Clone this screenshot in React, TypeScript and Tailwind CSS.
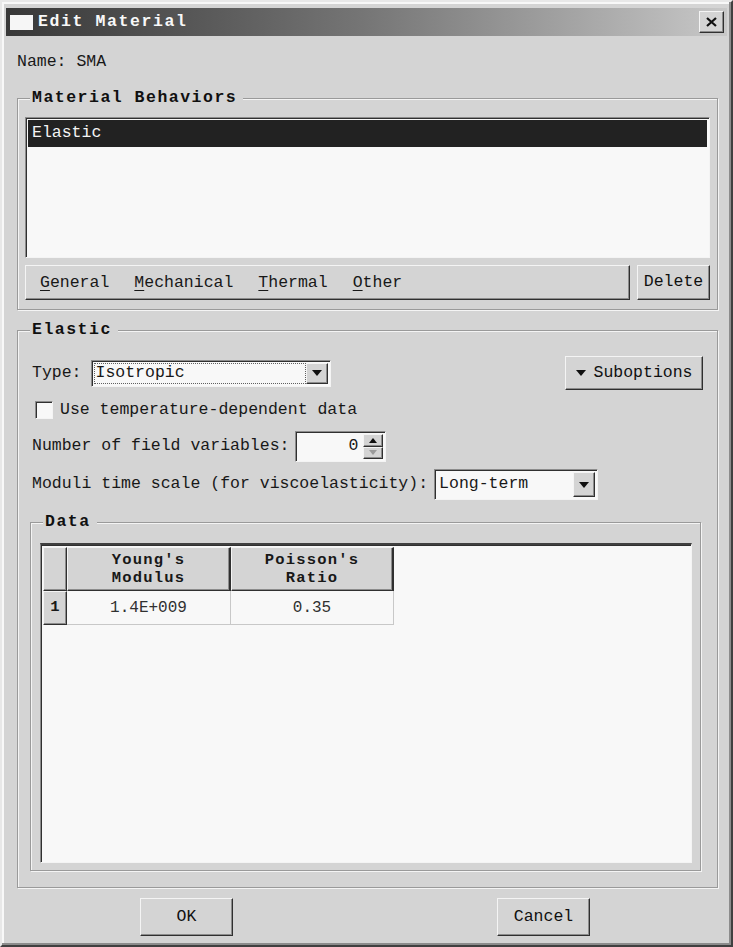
import React from 'react';

const mono = "font-['Liberation_Mono','DejaVu_Sans_Mono',monospace]";

const raised =
  'border border-t-[#f4f4f4] border-l-[#f4f4f4] border-b-[#303030] border-r-[#303030] shadow-[inset_-1px_-1px_0_#8c8c8c]';
const sunken =
  'border border-t-[#8c8c8c] border-l-[#8c8c8c] border-b-[#f4f4f4] border-r-[#f4f4f4] shadow-[inset_1px_1px_0_#303030]';

type GroupProps = {
  label: string;
  className?: string;
  children: React.ReactNode;
};

const Group = ({ label, className, children }: GroupProps) => {
  return (
    <div
      className={`relative border border-[#9a9a9a] shadow-[inset_1px_1px_0_#f4f4f4,1px_1px_0_#f4f4f4] ${className ?? ''}`}
    >
      <span className="absolute -top-[10px] left-[12px] bg-[#d4d4d4] pl-[2px] pr-[6px] text-[16.5px] leading-[18px] font-bold tracking-[1.5px] text-[#101010]">
        {label}
      </span>
      {children}
    </div>
  );
};

const Arrow = ({ className }: { className?: string }) => (
  <svg width="12" height="8" viewBox="0 0 12 8" className={className}>
    <path d="M1 1h10L6 7z" fill="currentColor" />
  </svg>
);

const Combo = ({ value, width, focus }: { value: string; width: string; focus?: boolean }) => {
  return (
    <div className={`flex items-stretch bg-[#f8f8f8] p-[2px] ${sunken} ${width}`}>
      <div
        className={`flex flex-1 items-center pl-[2px] text-[16.5px] text-[#181818] ${
          focus ? 'outline-dotted outline-1 outline-[#606060] -outline-offset-1' : ''
        }`}
      >
        {value}
      </div>
      <div className={`flex w-[22px] items-center justify-center bg-[#d4d4d4] text-[#101010] ${raised}`}>
        <Arrow />
      </div>
    </div>
  );
};

const MenuItem = ({ first, rest }: { first: string; rest: string }) => (
  <span>
    <span className="underline underline-offset-[3px]">{first}</span>
    {rest}
  </span>
);

const Button = ({ children, className }: { children: React.ReactNode; className?: string }) => (
  <div className={`flex items-center justify-center bg-[#d4d4d4] text-[16.5px] text-[#101010] ${raised} ${className ?? ''}`}>
    {children}
  </div>
);

export default function App() {
  return (
    <div
      className={`${mono} flex h-[947px] w-[733px] flex-col border-[2px] border-t-[#e8e8e8] border-l-[#e8e8e8] border-b-[#404040] border-r-[#404040] bg-[#d4d4d4] px-[4px] pt-[6px] pb-[4px] text-[#181818] shadow-[inset_-2px_-2px_0_#8c8c8c,inset_2px_2px_0_#f8f8f8]`}
    >
      {/* title bar */}
      <div className="flex h-[28px] items-center bg-gradient-to-r from-[#383838] via-[#767676] to-[#c8c8c8] pl-[4px] pr-[3px]">
        <div className="h-[15px] w-[23px] bg-[#f6f6f6]" />
        <span className="ml-[5px] text-[16.5px] font-bold tracking-[1.6px] text-[#f8f8f8]">Edit Material</span>
        <div className={`ml-auto flex h-[22px] w-[25px] items-center justify-center bg-[#d4d4d4] ${raised}`}>
          <svg width="11" height="10" viewBox="0 0 11 10">
            <path d="M1 1l9 8M10 1l-9 8" stroke="#101010" strokeWidth="2.2" />
          </svg>
        </div>
      </div>

      <div className="flex flex-1 flex-col pl-[11px] pr-[9px]">
        <div className="flex h-[52px] items-center text-[16.5px]">Name: SMA</div>

        <Group label="Material Behaviors" className="mt-[10px] px-[7px] pt-[18px] pb-[9px]">
          <div className={`h-[141px] bg-[#f8f8f8] p-[2px] ${sunken}`}>
            <div className="flex h-[27px] items-center bg-[#222222] pl-[4px] text-[16.5px] text-[#f4f4f4]">
              Elastic
            </div>
          </div>
          <div className="mt-[7px] flex h-[35px] gap-[7px]">
            <div className={`flex flex-1 items-center gap-[25px] pl-[14px] pt-[2px] text-[16.5px] ${raised}`}>
              <MenuItem first="G" rest="eneral" />
              <MenuItem first="M" rest="echanical" />
              <MenuItem first="T" rest="hermal" />
              <MenuItem first="O" rest="ther" />
            </div>
            <Button className="w-[73px]">Delete</Button>
          </div>
        </Group>

        <Group label="Elastic" className="mt-[20px] flex h-[558px] flex-col pl-[14px] pr-[14px]">
          <div className="mt-[25px] flex h-[34px] items-center">
            <span className="text-[16.5px]">Type:</span>
            <div className="ml-[9px]">
              <Combo value="Isotropic" width="w-[240px] h-[27px]" focus />
            </div>
            <Button className="ml-auto h-[34px] w-[138px] gap-[6px]">
              <Arrow />
              Suboptions
            </Button>
          </div>

          <div className="mt-[10px] flex h-[20px] items-center">
            <div className={`ml-[3px] h-[18px] w-[18px] bg-[#f8f8f8] ${sunken}`} />
            <span className="ml-[7px] text-[16.5px]">Use temperature-dependent data</span>
          </div>

          <div className="mt-[11px] flex h-[31px] items-center">
            <span className="text-[16.5px]">Number of field variables:</span>
            <div className={`ml-[6px] flex h-[31px] w-[91px] items-stretch bg-[#f8f8f8] p-[2px] ${sunken}`}>
              <div className="flex flex-1 items-center justify-end pr-[5px] text-[16.5px]">0</div>
              <div className="flex w-[20px] flex-col">
                <div className={`flex flex-1 items-center justify-center bg-[#d4d4d4] ${raised}`}>
                  <svg width="8" height="5" viewBox="0 0 8 5">
                    <path d="M0 5L4 0l4 5z" fill="#101010" />
                  </svg>
                </div>
                <div className={`flex flex-1 items-center justify-center bg-[#d4d4d4] ${raised}`}>
                  <svg width="8" height="5" viewBox="0 0 8 5">
                    <path d="M0 0h8L4 5z" fill="#9a9a9a" />
                  </svg>
                </div>
              </div>
            </div>
          </div>

          <div className="mt-[7px] flex h-[31px] items-center">
            <span className="text-[16.5px]">Moduli time scale (for viscoelasticity):</span>
            <div className="ml-[6px]">
              <Combo value="Long-term" width="w-[164px] h-[31px]" />
            </div>
          </div>

          <Group label="Data" className="mt-[22px] ml-[-2px] mr-[2px] h-[349px] pl-[9px] pr-[8px] pt-[20px] pb-[7px]">
            <div className={`h-full bg-[#f8f8f8] p-[2px] ${sunken} border-t-[2px] border-t-[#404040]`}>
              <div className="flex h-[44px]">
                <div className={`w-[24px] bg-[#d4d4d4] ${raised}`} />
                <div
                  className={`flex w-[164px] flex-col items-center justify-center bg-[#d4d4d4] text-[15.5px] leading-[18px] font-bold tracking-[1.2px] ${raised} border-r-[2px]`}
                >
                  <span>Young's</span>
                  <span>Modulus</span>
                </div>
                <div
                  className={`flex w-[163px] flex-col items-center justify-center bg-[#d4d4d4] text-[15.5px] leading-[18px] font-bold tracking-[1.2px] ${raised} border-r-[2px]`}
                >
                  <span>Poisson's</span>
                  <span>Ratio</span>
                </div>
              </div>
              <div className="flex h-[34px]">
                <div className={`flex w-[24px] items-center justify-center bg-[#d4d4d4] text-[15.5px] font-bold ${raised}`}>
                  1
                </div>
                <div className="flex w-[164px] items-center justify-center border-r border-b border-[#c8c8c8] text-[16px] text-[#303030]">
                  1.4E+009
                </div>
                <div className="flex w-[163px] items-center justify-center border-r border-b border-[#c8c8c8] text-[16px] text-[#303030]">
                  0.35
                </div>
              </div>
            </div>
          </Group>
        </Group>

        <div className="mt-[10px] flex h-[38px] pl-[123px]">
          <Button className="w-[93px]">OK</Button>
          <Button className="ml-[264px] w-[93px]">Cancel</Button>
        </div>
      </div>
    </div>
  );
}
